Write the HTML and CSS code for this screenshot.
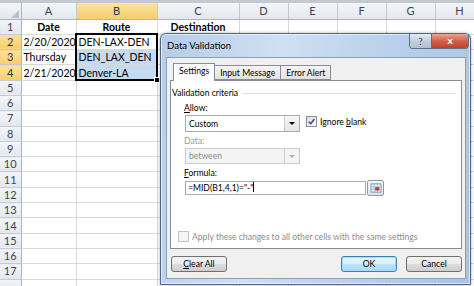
FILE: index.html
```html
<!DOCTYPE html>
<html lang="en">
<head>
    <meta charset="UTF-8">
    <meta name="viewport" content="width=device-width, initial-scale=1.0">
    <title>Data Validation</title>
    <link rel="stylesheet" href="styles.css">
</head>
<body>
    <div class="topbar"></div>
    <div class="sheet-wrap">
        <table class="sheet">
            <colgroup>
                <col class="w-head"><col class="w-a"><col class="w-b"><col class="w-c">
                <col class="w-n"><col class="w-n"><col class="w-n"><col class="w-n"><col class="w-n">
            </colgroup>
            <tr class="col-heads">
                <th class="corner"><svg viewBox="0 0 10 10"><polygon points="10,1 10,10 1,10" fill="#b9c0c9"/></svg></th>
                <th>A</th><th class="hl">B</th><th>C</th><th>D</th><th>E</th><th>F</th><th>G</th><th>H</th>
            </tr>
            <tr><th>1</th><td class="title-cell">Date</td><td class="title-cell">Route</td><td class="title-cell">Destination</td><td></td><td></td><td></td><td></td><td></td></tr>
            <tr><th class="hl">2</th><td class="num">2/20/2020</td><td>DEN-LAX-DEN</td><td></td><td></td><td></td><td></td><td></td><td></td></tr>
            <tr><th class="hl">3</th><td>Thursday</td><td class="picked">DEN_LAX_DEN</td><td></td><td></td><td></td><td></td><td></td><td></td></tr>
            <tr><th class="hl">4</th><td class="num">2/21/2020</td><td class="picked">Denver-LA</td><td></td><td></td><td></td><td></td><td></td><td></td></tr>
            <tr><th>5</th><td></td><td></td><td></td><td></td><td></td><td></td><td></td><td></td></tr>
            <tr><th>6</th><td></td><td></td><td></td><td></td><td></td><td></td><td></td><td></td></tr>
            <tr><th>7</th><td></td><td></td><td></td><td></td><td></td><td></td><td></td><td></td></tr>
            <tr><th>8</th><td></td><td></td><td></td><td></td><td></td><td></td><td></td><td></td></tr>
            <tr><th>9</th><td></td><td></td><td></td><td></td><td></td><td></td><td></td><td></td></tr>
            <tr><th>10</th><td></td><td></td><td></td><td></td><td></td><td></td><td></td><td></td></tr>
            <tr><th>11</th><td></td><td></td><td></td><td></td><td></td><td></td><td></td><td></td></tr>
            <tr><th>12</th><td></td><td></td><td></td><td></td><td></td><td></td><td></td><td></td></tr>
            <tr><th>13</th><td></td><td></td><td></td><td></td><td></td><td></td><td></td><td></td></tr>
            <tr><th>14</th><td></td><td></td><td></td><td></td><td></td><td></td><td></td><td></td></tr>
            <tr><th>15</th><td></td><td></td><td></td><td></td><td></td><td></td><td></td><td></td></tr>
            <tr><th>16</th><td></td><td></td><td></td><td></td><td></td><td></td><td></td><td></td></tr>
            <tr><th>17</th><td></td><td></td><td></td><td></td><td></td><td></td><td></td><td></td></tr>
            <tr class="last"><th></th><td></td><td></td><td></td><td></td><td></td><td></td><td></td><td></td></tr>
        </table>
        <!-- range B2:B4 -->
        <div class="selection"><span class="fill-handle"></span></div>
    </div>

    <div class="dialog">
        <div class="titlebar">
            <span class="title">Data Validation</span>
            <div class="caption-btns">
                <span class="cap-help">?</span>
                <span class="cap-close">x</span>
            </div>
        </div>
        <div class="client">
            <div class="tabs">
                <span class="tab active">Settings</span>
                <span class="tab">Input Message</span>
                <span class="tab">Error Alert</span>
            </div>
            <div class="panel">
                <div class="group-title"><span>Validation criteria</span></div>
                <div class="label"><u>A</u>llow:</div>
                <div class="row">
                    <div class="combo">
                        <span>Custom</span>
                        <span class="combo-btn"></span>
                    </div>
                    <label class="check">
                        <span class="box checked">
                            <svg viewBox="0 0 10 10"><path d="M2 5.2 L4.2 7.5 L8.2 2.2" fill="none" stroke="#2c4c91" stroke-width="1.6"/></svg>
                        </span>
                        <span>Ignore <u>b</u>lank</span>
                    </label>
                </div>
                <div class="label disabled">Data:</div>
                <div class="combo disabled">
                    <span>between</span>
                    <span class="combo-btn"></span>
                </div>
                <div class="label"><u>F</u>ormula:</div>
                <div class="row">
                    <div class="formula">=MID(B1,4,1)="-"<span class="caret"></span></div>
                    <span class="ref-btn">
                        <svg viewBox="0 0 14 12">
                            <rect x="1" y="1" width="12" height="10" fill="#e3ecf7" stroke="#6f8db5"/>
                            <path d="M1 4.5 H13 M1 7.5 H13 M5 1 V11 M9 1 V11" stroke="#9fb5d3" stroke-width="0.8"/>
                            <rect x="6" y="5" width="5" height="4" fill="#d8342b"/>
                        </svg>
                    </span>
                </div>
                <label class="check apply">
                    <span class="box"></span>
                    <span>Apply these changes to all other cells with the same settings</span>
                </label>
            </div>
            <div class="buttons">
                <span class="btn"><u>C</u>lear All</span>
                <span class="spacer"></span>
                <span class="btn default">OK</span>
                <span class="btn">Cancel</span>
            </div>
        </div>
    </div>
</body>
</html>
```

FILE: styles.css
```css
* {
    box-sizing: border-box;
}
body {
    margin: 0;
    width: 474px;
    height: 286px;
    overflow: hidden;
    background-color: #fff;
    position: relative;
    font-family: 'Lato', 'Liberation Sans', sans-serif;
}
.topbar {
    height: 3px;
    background-color: #c3c9d1;
}
.sheet-wrap {
    position: relative;
}
.sheet {
    border-collapse: collapse;
    table-layout: fixed;
    width: 484px;
    font-size: 10.5px;
    color: #000;
}
.w-head { width: 21px; }
.w-a { width: 55px; }
.w-b { width: 81px; }
.w-c { width: 82px; }
.w-n { width: 49px; }
.sheet tr {
    height: 15.3px;
}
.sheet tr.col-heads {
    height: 16px;
}
.sheet th {
    font-weight: normal;
    color: #3a4657;
    font-size: 11px;
    padding: 0;
    background: linear-gradient(#f3f5f8, #e3e7ed);
    border-right: 1px solid #c3cad3;
    border-bottom: 1px solid #c3cad3;
    line-height: 14px;
    text-align: center;
    overflow: hidden;
}
.col-heads th {
    border-bottom-color: #a9b6c6;
}
.sheet tr th:first-child {
    border-right-color: #a9b6c6;
}
.sheet th.hl {
    background: linear-gradient(#fbe3a0, #f6cd6a);
    color: #2f3a49;
}
.corner svg {
    display: block;
    width: 9px;
    height: 9px;
    margin: 5px 2px 0 auto;
}
.sheet td {
    border-right: 1px solid #d9d9d9;
    border-bottom: 1px solid #d9d9d9;
    padding: 0 2px 0 2px;
    white-space: nowrap;
    overflow: visible;
    line-height: 14px;
}
.title-cell {
    font-weight: bold;
    text-align: center;
}
.num {
    text-align: right;
}
.picked {
    background-color: #c4daf1;
}
.selection {
    position: absolute;
    left: 75px;
    top: 30px;
    width: 83px;
    height: 48px;
    border: 2px solid #000;
}
.fill-handle {
    position: absolute;
    right: -4px;
    bottom: -4px;
    width: 6px;
    height: 6px;
    background-color: #000;
    border: 1px solid #fff;
}

/* dialog window */
.dialog {
    position: absolute;
    left: 160px;
    top: 33px;
    width: 311px;
    height: 252px;
    border: 1px solid #4f6783;
    border-radius: 6px 6px 0 0;
    background: linear-gradient(100deg, #b6cde6 0%, #cfe0f2 35%, #bcd3ea 60%, #a9c4e2 100%);
    box-shadow: 0 0 3px rgba(0, 0, 0, 0.35), inset 0 0 0 1px rgba(255, 255, 255, 0.6);
    font-family: 'Lato', 'Noto Sans', sans-serif;
    font-size: 8.6px;
    color: #000;
    display: flex;
    flex-direction: column;
}
.titlebar {
    height: 23px;
    display: flex;
    justify-content: space-between;
    align-items: flex-start;
    padding-left: 6px;
    padding-right: 1px;
}
.title {
    font-size: 9.6px;
    margin-top: 6px;
}
.caption-btns {
    display: flex;
    border: 1px solid #5c6f86;
    border-top: none;
    border-radius: 0 0 4px 4px;
    overflow: hidden;
    height: 15px;
}
.cap-help {
    width: 22px;
    text-align: center;
    background: linear-gradient(#e4eaf1, #c5cfdb 50%, #b1bfcf);
    border-right: 1px solid #5c6f86;
    color: #3d4b5c;
    font-size: 10px;
    line-height: 14px;
}
.cap-close {
    width: 36px;
    text-align: center;
    background: linear-gradient(#e6a596, #d0624d 50%, #c0412b);
    color: #fff;
    font-weight: bold;
    font-size: 10px;
    line-height: 13px;
}
.client {
    flex: 1;
    margin: 0 4px 5px 5px;
    background-color: #f0f0f0;
    border: 1px solid #8aa0ba;
    display: flex;
    flex-direction: column;
    padding: 6px 3px 0 3px;
}
.tabs {
    display: flex;
    padding-left: 3px;
    height: 16px;
    position: relative;
    z-index: 1;
}
.tab {
    border: 1px solid #898c95;
    border-right: none;
    background: linear-gradient(#f5f5f5, #e2e2e2);
    padding: 0 5px;
    line-height: 14px;
    margin-top: 1px;
    height: 15px;
}
.tab:last-child {
    border-right: 1px solid #898c95;
}
.tab.active {
    background: #fff;
    margin-top: -1px;
    height: 18px;
    border-bottom: none;
    border-right: 1px solid #898c95;
    margin-right: -1px;
    z-index: 2;
}
.panel {
    height: 169px;
    background-color: #fff;
    border: 1px solid #898c95;
    padding: 6px 6px 0 1px;
    display: flex;
    flex-direction: column;
}
.group-title {
    display: flex;
    align-items: center;
    line-height: 12px;
}
.group-title::after {
    content: '';
    flex: 1;
    height: 1px;
    background-color: #dcdcdc;
    margin-left: 5px;
}
.label {
    margin: 3px 0 0 12px;
    line-height: 12px;
}
.label.disabled {
    color: #9a9a9a;
    margin-top: 3px;
}
.row {
    display: flex;
    align-items: flex-start;
}
.combo {
    width: 115px;
    height: 17px;
    margin-left: 13px;
    margin-top: 1px;
    border: 1px solid #a5acb5;
    background-color: #fff;
    display: flex;
    align-items: center;
    justify-content: space-between;
    padding-left: 3px;
}
.combo-btn {
    width: 15px;
    height: 15px;
    border-left: 1px solid #c8ccd2;
    background: linear-gradient(#f7f7f7, #e5e5e5);
    position: relative;
}
.combo-btn::after {
    content: '';
    position: absolute;
    left: 4px;
    top: 6px;
    border-left: 3px solid transparent;
    border-right: 3px solid transparent;
    border-top: 3px solid #000;
}
.combo.disabled {
    background-color: #f4f4f4;
    color: #8d8d8d;
    border-color: #c9cbcd;
    height: 16px;
}
.combo.disabled .combo-btn {
    background: #f4f4f4;
    height: 14px;
}
.combo.disabled .combo-btn::after {
    border-top-color: #b0b0b0;
}
.check {
    display: flex;
    align-items: center;
    gap: 3px;
}
.row .check {
    margin: 2px 0 0 6px;
}
.box {
    width: 11px;
    height: 11px;
    border: 1px solid #8e8f8f;
    background: linear-gradient(135deg, #dcdcdc, #fbfbfb);
    display: inline-block;
}
.box svg {
    display: block;
    width: 9px;
    height: 9px;
}
.apply {
    margin: 35px 0 0 6px;
    color: #8d8d8d;
}
.apply .box {
    border-color: #c2c2c2;
    background: #f4f4f4;
}
.formula {
    width: 181px;
    height: 14px;
    margin: 2px 0 0 13px;
    border: 1px solid #a5acb5;
    line-height: 12px;
    padding-left: 2px;
    white-space: nowrap;
}
.caret {
    display: inline-block;
    width: 1px;
    height: 10px;
    background-color: #000;
    vertical-align: -1px;
}
.ref-btn {
    width: 17px;
    height: 16px;
    margin: 1px 0 0 1px;
    border: 1px solid #8f98a5;
    border-radius: 2px;
    background: linear-gradient(#f4f6f9, #dfe4ea);
    display: flex;
    align-items: center;
    justify-content: center;
}
.ref-btn svg {
    width: 12px;
    height: 10px;
}
.buttons {
    display: flex;
    margin-top: 7px;
    padding-left: 1px;
}
.spacer {
    flex: 1;
}
.btn {
    width: 56px;
    height: 16px;
    border: 1px solid #707070;
    border-radius: 3px;
    background: linear-gradient(#f2f2f2 0%, #ebebeb 50%, #dddddd 51%, #cfcfcf 100%);
    text-align: center;
    line-height: 14px;
    margin-left: 9px;
}
.btn:first-child {
    margin-left: 0;
}
.btn.default {
    border-color: #3c7fb1;
    box-shadow: inset 0 0 0 1px #a8daf4;
    background: linear-gradient(#eaf6fd 0%, #d9f0fc 50%, #bee6fd 51%, #a7d9f5 100%);
}
```
